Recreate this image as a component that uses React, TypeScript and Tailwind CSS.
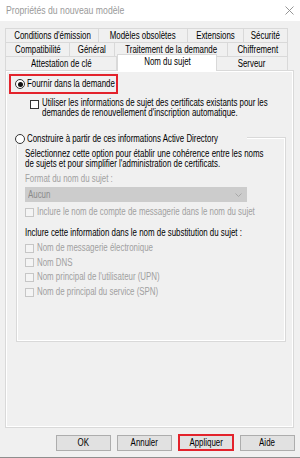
import React from 'react';

const tabRows: [string, number][][] = [
  [["Conditions d'émission", 94], ['Modèles obsolètes', 89], ['Extensions', 56], ['Sécurité', 44]],
  [['Compatibilité', 65], ['Général', 45], ['Traitement de la demande', 113], ['Chiffrement', 60]],
];

const altNames = [
  'Nom de messagerie électronique',
  'Nom DNS',
  "Nom principal de l'utilisateur (UPN)",
  'Nom de principal du service (SPN)',
];

// police Windows plus étroite que Arial : on resserre le texte horizontalement
const T = ({ children, center }: { children: React.ReactNode; center?: boolean }) => (
  <span
    className={`inline-block whitespace-nowrap leading-none scale-x-[0.79] ${
      center ? 'origin-center' : 'origin-left'
    }`}
  >
    {children}
  </span>
);

const Radio = ({ checked }: { checked?: boolean }) => (
  <span className="w-[10px] h-[10px] rounded-full border border-[#333] bg-white flex items-center justify-center shrink-0">
    {checked && <span className="w-[5px] h-[5px] rounded-full bg-[#111]" />}
  </span>
);

const Box = ({ disabled }: { disabled?: boolean }) => (
  <span
    className={`block w-[9px] h-[9px] border shrink-0 ${
      disabled ? 'border-[#c6c6c6] bg-[#f4f4f4]' : 'border-[#333] bg-white'
    }`}
  />
);

export default function App() {
  return (
    <div className="w-[300px] h-[458px] bg-[#f0f0f0] flex flex-col border-b border-[#8e8e8e] overflow-hidden text-[10px] text-black font-['Liberation_Sans',Arial,sans-serif]">
      {/* barre de titre */}
      <div className="h-[21px] bg-white flex items-center justify-between pl-[6px] pr-[6px] shrink-0">
        <span className="text-[11px] text-[#9a9a9a]">
          <T>Propriétés du nouveau modèle</T>
        </span>
        <svg width="9" height="9" viewBox="0 0 9 9" className="stroke-[#8a8a8a]">
          <path d="M0.5 0.5 L8.5 8.5 M8.5 0.5 L0.5 8.5" strokeWidth="0.9" />
        </svg>
      </div>

      <div className="pt-[7px] px-[5px] flex flex-col">
        {/* onglets */}
        <div className="w-[283px] flex flex-col">
          {tabRows.map((row, i) => (
            <div key={i} className="flex h-[14px]">
              {row.map(([label, w], j) => (
                <div
                  key={label}
                  style={{ width: w }}
                  className={`h-[14px] border-t border-r border-[#d9d9d9] flex items-center justify-center ${
                    j === 0 ? 'border-l' : ''
                  }`}
                >
                  <T center>{label}</T>
                </div>
              ))}
            </div>
          ))}
          <div className="flex h-[14px] items-start">
            <div className="w-[112px] h-[14px] border-t border-l border-r border-[#d9d9d9] flex items-center justify-center">
              <T center>Attestation de clé</T>
            </div>
            <div className="relative z-10 w-[100px] h-[17px] -mt-[2px] bg-white border-t border-l border-r border-[#d9d9d9] flex items-center justify-center pb-[3px]">
              <T center>Nom du sujet</T>
            </div>
            <div className="w-[71px] h-[14px] border-t border-r border-[#d9d9d9] flex items-center justify-center">
              <T center>Serveur</T>
            </div>
          </div>
        </div>

        {/* page */}
        <div className="w-[289px] h-[358px] border border-[#d9d9d9] shadow-[inset_1px_1px_0_#fff,inset_-1px_-1px_0_#fff] flex flex-col">
          <div className="ml-[3px] mt-[3px] w-[109px] h-[20px] border-2 border-[#e3232c] flex items-center pl-[4px] gap-[2px]">
            <Radio checked />
            <T>Fournir dans la demande</T>
          </div>

          <div className="ml-[24px] mt-[3px] flex items-start gap-[3px]">
            <span className="mt-[3px]">
              <Box />
            </span>
            <p className="leading-[10px] pt-[1px]">
              <T>Utiliser les informations de sujet des certificats existants pour les</T>
              <br />
              <T>demandes de renouvellement d'inscription automatique.</T>
            </p>
          </div>

          <div className="relative z-10 ml-[8px] mt-[15px] w-[233px] h-[12px] bg-[#f0f0f0] flex items-center pl-[1px] gap-[2px]">
            <Radio />
            <T>Construire à partir de ces informations Active Directory</T>
          </div>

          <div className="ml-[10px] -mt-[8px] w-[270px] h-[205px] border border-[#d9d9d9] shadow-[inset_1px_1px_0_#fff,inset_-1px_-1px_0_#fff] pt-[11px] pl-[8px] flex flex-col">
            <p className="leading-[10px]">
              <T>Sélectionnez cette option pour établir une cohérence entre les noms</T>
              <br />
              <T>de sujets et pour simplifier l'administration de certificats.</T>
            </p>
            <p className="mt-[5px] h-[10px] flex items-center text-[#a0a0a0]">
              <T>Format du nom du sujet :</T>
            </p>
            <div className="mt-[3px] w-[222px] h-[15px] bg-[#cccccc] flex items-center justify-between pl-[3px] pr-[5px] text-[#8a8a8a]">
              <T>Aucun</T>
              <svg width="7" height="4" viewBox="0 0 7 4" className="stroke-[#a4a4a4] fill-none">
                <path d="M0.5 0.5 L3.5 3.5 L6.5 0.5" strokeWidth="0.9" />
              </svg>
            </div>
            <div className="mt-[5px] h-[10px] flex items-center gap-[3px] text-[#a0a0a0]">
              <Box disabled />
              <T>Inclure le nom de compte de messagerie dans le nom du sujet</T>
            </div>
            <p className="mt-[11px] h-[10px] flex items-center">
              <T>Inclure cette information dans le nom de substitution du sujet :</T>
            </p>
            <div className="mt-[5px] flex flex-col gap-[4.7px]">
              {altNames.map(n => (
                <div key={n} className="h-[10px] flex items-center gap-[3px] text-[#a0a0a0]">
                  <Box disabled />
                  <T>{n}</T>
                </div>
              ))}
            </div>
          </div>
        </div>

        {/* boutons */}
        <div className="mt-[7px] flex justify-end gap-[6px]">
          <button className="w-[55px] h-[16px] bg-[#e1e1e1] border border-[#adadad] flex items-center justify-center">
            <T center>OK</T>
          </button>
          <button className="w-[55px] h-[16px] bg-[#e1e1e1] border border-[#adadad] flex items-center justify-center">
            <T center>Annuler</T>
          </button>
          <button className="w-[56px] h-[17px] -mt-[1px] bg-[#e1e1e1] border-2 border-[#e3232c] flex items-center justify-center">
            <T center>Appliquer</T>
          </button>
          <button className="w-[55px] h-[16px] bg-[#e1e1e1] border border-[#adadad] flex items-center justify-center">
            <T center>Aide</T>
          </button>
        </div>
      </div>
    </div>
  );
}
